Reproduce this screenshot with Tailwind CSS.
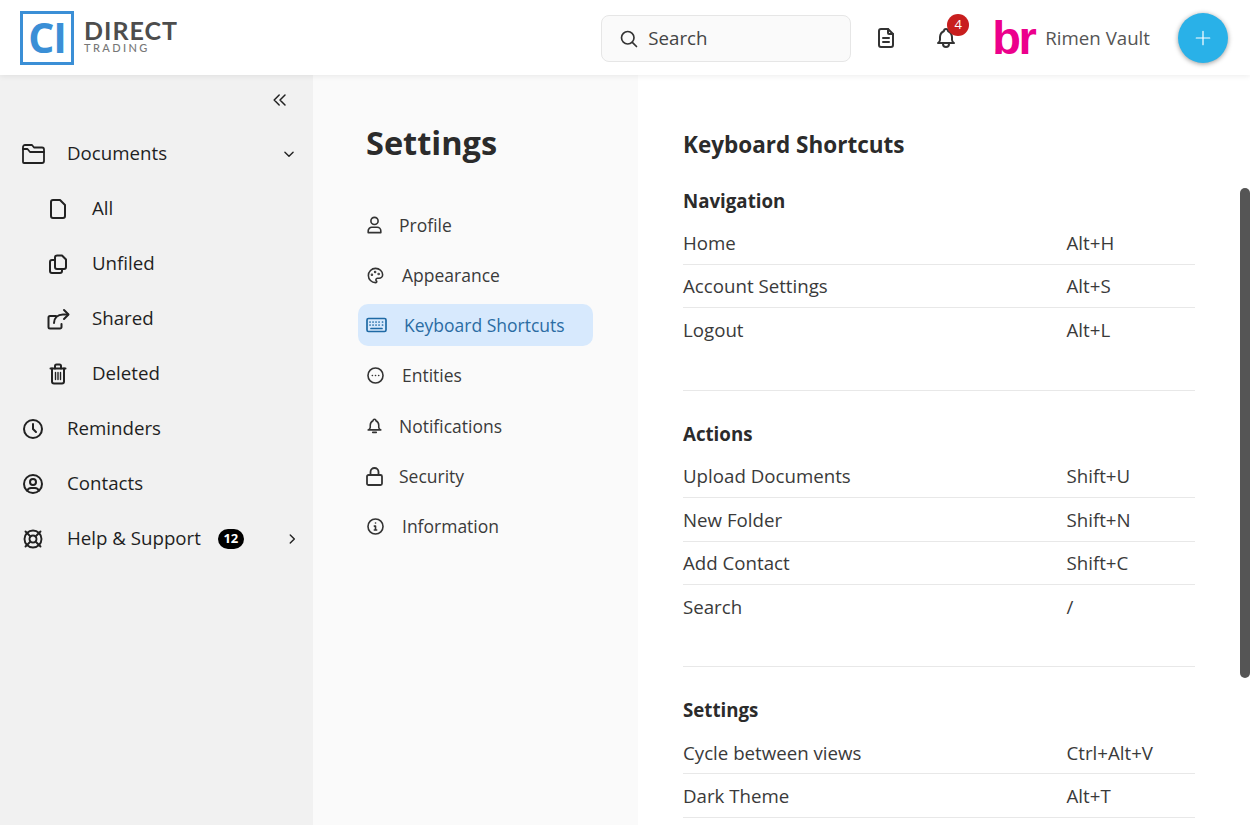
<!DOCTYPE html>
<html lang="en">
<head>
  <meta charset="UTF-8">
  <title>Settings - Keyboard Shortcuts</title>
  <script src="https://cdn.jsdelivr.net/npm/@tailwindcss/browser@4"></script>
</head>
<body class="h-screen overflow-hidden bg-white font-['Open_Sans',sans-serif] text-[#2b2b2b]">

<!-- top bar -->
<header class="relative z-10 flex h-[75px] items-center bg-white pl-[20px] pr-[22px] shadow-[0_1px_6px_rgba(0,0,0,0.08)]">
  <div class="flex items-center gap-[10px]">
    <div class="flex h-[54px] w-[54px] items-center justify-center border-[3px] border-[#3b8fd6] font-['Open_Sans',sans-serif] text-[41px] font-bold leading-none tracking-[-1px] text-[#3b8fd6]">CI</div>
    <div class="-mt-[4px] flex flex-col font-['Lato',sans-serif] leading-none">
      <span class="text-[25px] font-bold tracking-[1px] text-[#4d4d4d] leading-[24px]">DIRECT</span>
      <span class="text-[11px] font-medium tracking-[2.4px] text-[#777] leading-[11px]">TRADING</span>
    </div>
  </div>

  <div class="ml-auto flex items-center">
    <label class="mt-[2px] flex h-[47px] w-[250px] items-center gap-[9px] rounded-[8px] border border-[#e6e6e6] bg-[#fafafa] pl-[17px] text-[18.700px] text-[#444]">
      <svg class="h-[20px] w-[20px]" viewBox="0 0 24 24" fill="none" stroke="#333" stroke-width="2" stroke-linecap="round" stroke-linejoin="round"><circle cx="10.5" cy="10.5" r="7.5"/><path d="M21 21l-5-5"/></svg>
      <span>Search</span>
    </label>
    <svg class="ml-[23px] h-[24px] w-[24px]" viewBox="0 0 24 24" fill="none" stroke="#333" stroke-width="2" stroke-linecap="round" stroke-linejoin="round"><path d="M14 3v4a1 1 0 0 0 1 1h4"/><path d="M17 21H7a2 2 0 0 1-2-2V5a2 2 0 0 1 2-2h7l5 5v11a2 2 0 0 1-2 2z"/><path d="M9 12h6M9 16h6"/></svg>
    <div class="relative ml-[36px] h-[24px] w-[24px]">
      <svg class="h-[24px] w-[24px]" viewBox="0 0 24 24" fill="none" stroke="#333" stroke-width="2" stroke-linecap="round" stroke-linejoin="round"><path d="M10 5a2 2 0 1 1 4 0 7 7 0 0 1 4 6v3a4 4 0 0 0 2 3H4a4 4 0 0 0 2-3v-3a7 7 0 0 1 4-6"/><path d="M9 17v1a3 3 0 0 0 6 0v-1"/></svg>
      <span class="absolute left-[13px] top-[-12px] flex h-[22px] w-[22px] items-center justify-center rounded-full bg-[#c81e1e] text-[13px] text-white">4</span>
    </div>
    <span class="ml-[34px] w-[42px] font-['Liberation_Sans',sans-serif] text-[47px] font-bold leading-none tracking-[-2.500px] text-[#ec008c]">br</span>
    <span class="ml-[11px] text-[18.700px] leading-[28px] text-[#555]">Rimen Vault</span>
    <button class="ml-[28px] flex h-[50px] w-[50px] items-center justify-center rounded-full bg-[#29b1e8] shadow-[0_1px_5px_rgba(0,0,0,0.4)]">
      <svg class="h-[18px] w-[18px]" viewBox="0 0 24 24" fill="none" stroke="#fff" stroke-width="1.6" stroke-linecap="round"><path d="M12 3v18M3 12h18"/></svg>
    </button>
  </div>
</header>

<div class="flex h-[750px]">
  <!-- main sidebar -->
  <aside class="w-[313px] shrink-0 bg-[#f1f1f1] text-[18.700px] text-[#1f1f1f]">
    <div class="flex h-[50px] items-center justify-end pr-[23px]">
      <svg class="h-[20px] w-[20px]" viewBox="0 0 24 24" fill="none" stroke="#222" stroke-width="1.8" stroke-linecap="round" stroke-linejoin="round"><path d="M11 6l-6 6 6 6M18 6l-6 6 6 6"/></svg>
    </div>
    <nav class="pt-[1px]">
      <a class="flex h-[55px] items-center pl-[21px]">
        <svg class="h-[22px] w-[25px]" viewBox="0 0 25 22" fill="none" stroke="#222" stroke-width="1.800" stroke-linecap="round" stroke-linejoin="round"><path d="M2 19V6h4.500l2.500 3h14v9a2 2 0 0 1-2 2H3a1 1 0 0 1-1-1z"/><path d="M2 6V4a2 2 0 0 1 2-2h7l2 2.500h8a2 2 0 0 1 2 2V9"/></svg>
        <span class="ml-[21px]">Documents</span>
        <svg class="ml-auto mr-[17px] h-[14px] w-[14px]" viewBox="0 0 24 24" fill="none" stroke="#222" stroke-width="2.4" stroke-linecap="round" stroke-linejoin="round"><path d="M5 9l7 7 7-7"/></svg>
      </a>
      <a class="flex h-[55px] items-center pl-[46px]">
        <svg class="h-[24px] w-[24px]" viewBox="0 0 24 24" fill="none" stroke="#222" stroke-width="2" stroke-linecap="round" stroke-linejoin="round"><path d="M17 21H7a2 2 0 0 1-2-2V5a2 2 0 0 1 2-2h7l5 5v11a2 2 0 0 1-2 2z"/></svg>
        <span class="ml-[22px]">All</span>
      </a>
      <a class="flex h-[55px] items-center pl-[46px]">
        <svg class="h-[24px] w-[24px]" viewBox="0 0 24 24" fill="none" stroke="#222" stroke-width="2" stroke-linecap="round" stroke-linejoin="round"><path d="M9 5.5a2 2 0 0 1 2-2h5l4 4V15a2 2 0 0 1-2 2h-7a2 2 0 0 1-2-2z"/><path d="M16 17v2a2 2 0 0 1-2 2H6a2 2 0 0 1-2-2V10a2 2 0 0 1 2-2h3"/></svg>
        <span class="ml-[22px]">Unfiled</span>
      </a>
      <a class="flex h-[55px] items-center pl-[46px]">
        <svg class="h-[24px] w-[24px]" viewBox="0 0 24 24" fill="none" stroke="#222" stroke-width="2" stroke-linecap="round" stroke-linejoin="round"><path d="M10 9H4a1.500 1.500 0 0 0-1.500 1.500V20A1.500 1.500 0 0 0 4 21.500h10a1.500 1.500 0 0 0 1.500-1.500v-3"/><path d="M8 16c0-5 3.500-8.500 9-8.500H22"/><path d="M18 3l4.500 4.500L18 12"/></svg>
        <span class="ml-[22px]">Shared</span>
      </a>
      <a class="flex h-[55px] items-center pl-[46px]">
        <svg class="h-[24px] w-[24px]" viewBox="0 0 24 24" fill="none" stroke="#222" stroke-width="2" stroke-linecap="round" stroke-linejoin="round"><path d="M4.500 6.500h15"/><path d="M6 6.500v13a2 2 0 0 0 2 2h8a2 2 0 0 0 2-2v-13"/><path d="M9 6.500V4a1.500 1.500 0 0 1 1.500-1.500h3A1.500 1.500 0 0 1 15 4v2.500"/><path d="M9.500 10.500v7M12 10.500v7M14.500 10.500v7" stroke-width="1.400"/></svg>
        <span class="ml-[22px]">Deleted</span>
      </a>
      <a class="flex h-[55px] items-center pl-[21px]">
        <svg class="h-[24px] w-[24px]" viewBox="0 0 24 24" fill="none" stroke="#222" stroke-width="2" stroke-linecap="round" stroke-linejoin="round"><circle cx="12" cy="12" r="9"/><path d="M12 7v5l3 3"/></svg>
        <span class="ml-[22px]">Reminders</span>
      </a>
      <a class="flex h-[55px] items-center pl-[21px]">
        <svg class="h-[24px] w-[24px]" viewBox="0 0 24 24" fill="none" stroke="#222" stroke-width="2" stroke-linecap="round" stroke-linejoin="round"><circle cx="12" cy="12" r="9"/><circle cx="12" cy="10" r="3"/><path d="M6.200 18.800A4 4 0 0 1 10 16h4a4 4 0 0 1 3.800 2.800"/></svg>
        <span class="ml-[22px]">Contacts</span>
      </a>
      <a class="flex h-[55px] items-center pl-[21px]">
        <svg class="h-[24px] w-[24px]" viewBox="0 0 24 24" fill="none" stroke="#222" stroke-width="1.900" stroke-linecap="round" stroke-linejoin="round"><circle cx="12" cy="12" r="8.500"/><circle cx="12" cy="12" r="3.500"/><path d="M4.500 4.500l5 5M19.500 4.500l-5 5M4.500 19.500l5-5M19.500 19.500l-5-5"/></svg>
        <span class="ml-[22px]">Help &amp; Support</span>
        <span class="ml-[17px] flex h-[20px] w-[26px] items-center justify-center rounded-full bg-black text-[13px] font-bold text-white">12</span>
        <svg class="ml-auto mr-[14px] h-[14px] w-[14px]" viewBox="0 0 24 24" fill="none" stroke="#222" stroke-width="2.400" stroke-linecap="round" stroke-linejoin="round"><path d="M9 5l7 7-7 7"/></svg>
      </a>
    </nav>
  </aside>

  <!-- settings menu -->
  <section class="w-[325px] shrink-0 bg-[#fafafa] pl-[45px] pr-[45px] text-[17.500px] text-[#3a3a3a]">
    <h1 class="ml-[8px] mt-[45px] text-[32.500px] font-bold leading-[46px] text-[#2b2b2b]">Settings</h1>
    <ul class="mt-[38px]">
      <li class="flex h-[42px] items-center gap-[16px] px-[8px]">
        <svg class="h-[18px] w-[17px]" viewBox="0 0 18 20" fill="none" stroke="#333" stroke-width="1.800" stroke-linecap="round" stroke-linejoin="round"><circle cx="9" cy="5.500" r="4"/><path d="M2 18.500v-2a4 4 0 0 1 4-4h6a4 4 0 0 1 4 4v2z"/></svg>
        <span>Profile</span>
      </li>
      <li class="mt-[8px] flex h-[42px] items-center gap-[17px] px-[8px]">
        <svg class="h-[19px] w-[19px]" viewBox="0 0 24 24" fill="none" stroke="#333" stroke-width="2" stroke-linecap="round" stroke-linejoin="round"><path d="M12 21a9 9 0 1 1 0-18c5 0 9 3.600 9 8a4.500 4.500 0 0 1-4.500 4.500h-2a2 2 0 0 0-1 3.750A1.300 1.300 0 0 1 12 21"/><circle cx="7.500" cy="11" r=".6"/><circle cx="11.500" cy="7.500" r=".6"/><circle cx="16" cy="10" r=".6"/></svg>
        <span>Appearance</span>
      </li>
      <li class="mt-[8px] flex h-[42px] items-center gap-[17px] rounded-[10px] bg-[#d7e9fd] px-[8px] text-[#2b6ca3]">
        <svg class="h-[16px] w-[21px]" viewBox="0 0 21 16" fill="none" stroke="#1f6aa5" stroke-width="1.700" stroke-linecap="round" stroke-linejoin="round"><rect x="1" y="1.500" width="19" height="13" rx="1.500"/><path d="M4 5h.1M7 5h.1M10 5h.1M13 5h.1M16.500 5h.1M4 8h.1M7 8h.1M10 8h.1M13 8h.1M16.500 8h.1M5 11.500h11"/></svg>
        <span>Keyboard Shortcuts</span>
      </li>
      <li class="mt-[8px] flex h-[42px] items-center gap-[17px] px-[8px]">
        <svg class="h-[19px] w-[19px]" viewBox="0 0 24 24" fill="none" stroke="#333" stroke-width="2" stroke-linecap="round" stroke-linejoin="round"><circle cx="12" cy="12" r="9.500"/><path d="M8 12h.1M12 12h.1M16 12h.1"/></svg>
        <span>Entities</span>
      </li>
      <li class="mt-[9px] flex h-[42px] items-center gap-[16px] px-[8px]">
        <svg class="h-[18px] w-[17px]" viewBox="0 0 24 24" fill="none" stroke="#333" stroke-width="2.200" stroke-linecap="round" stroke-linejoin="round"><path d="M10 4.500a2 2 0 1 1 4 0 7 7 0 0 1 4 6v3.500a4 4 0 0 0 3 3.500H3a4 4 0 0 0 3-3.500v-3.500a7 7 0 0 1 4-6"/><path d="M9.500 21h5"/></svg>
        <span>Notifications</span>
      </li>
      <li class="mt-[8px] flex h-[42px] items-center gap-[16px] px-[8px]">
        <svg class="h-[19px] w-[17px]" viewBox="0 0 17 19" fill="none" stroke="#333" stroke-width="1.800" stroke-linecap="round" stroke-linejoin="round"><rect x="1" y="8" width="15" height="10" rx="1.500"/><path d="M4.500 8V5a4 4 0 0 1 8 0v3"/></svg>
        <span>Security</span>
      </li>
      <li class="mt-[8px] flex h-[42px] items-center gap-[17px] px-[8px]">
        <svg class="h-[19px] w-[19px]" viewBox="0 0 24 24" fill="none" stroke="#333" stroke-width="2" stroke-linecap="round" stroke-linejoin="round"><circle cx="12" cy="12" r="9.500"/><path d="M12 7.500h.1"/><path d="M10.500 11.500H12V16.500M10.500 16.500h3"/></svg>
        <span>Information</span>
      </li>
    </ul>
  </section>

  <!-- shortcuts -->
  <main class="min-w-0 flex-1 pl-[45px] pr-[55px] text-[18.700px] text-[#3a3a3a]">
    <h2 class="mt-[52px] text-[22.500px] font-bold leading-[36px] text-[#2b2b2b]">Keyboard Shortcuts</h2>

    <h3 class="mt-[25px] text-[18.700px] font-bold leading-[26px] text-[#2b2b2b]">Navigation</h3>
    <div class="mt-[7px]">
      <div class="flex h-[43.500px] items-center border-b border-[#e8e8e8] pt-[1px]"><span class="w-[383.500px]">Home</span><span>Alt+H</span></div>
      <div class="flex h-[43.500px] items-center border-b border-[#e8e8e8] pt-[1px]"><span class="w-[383.500px]">Account Settings</span><span>Alt+S</span></div>
      <div class="flex h-[43.500px] items-center"><span class="w-[383.500px]">Logout</span><span>Alt+L</span></div>
    </div>
    <div class="mt-[38px] border-t border-[#e8e8e8]"></div>

    <h3 class="mt-[30px] text-[18.700px] font-bold leading-[26px] text-[#2b2b2b]">Actions</h3>
    <div class="mt-[8px]">
      <div class="flex h-[43.500px] items-center border-b border-[#e8e8e8]"><span class="w-[383.500px]">Upload Documents</span><span>Shift+U</span></div>
      <div class="flex h-[43.500px] items-center border-b border-[#e8e8e8] pt-[1px]"><span class="w-[383.500px]">New Folder</span><span>Shift+N</span></div>
      <div class="flex h-[43.500px] items-center border-b border-[#e8e8e8]"><span class="w-[383.500px]">Add Contact</span><span>Shift+C</span></div>
      <div class="flex h-[43.500px] items-center"><span class="w-[383.500px]">Search</span><span>/</span></div>
    </div>
    <div class="mt-[37px] border-t border-[#e8e8e8]"></div>

    <h3 class="mt-[30px] text-[18.700px] font-bold leading-[26px] text-[#2b2b2b]">Settings</h3>
    <div class="mt-[8px]">
      <div class="flex h-[43.500px] items-center border-b border-[#e8e8e8] pt-[2px]"><span class="w-[383.500px]">Cycle between views</span><span>Ctrl+Alt+V</span></div>
      <div class="flex h-[43.500px] items-center border-b border-[#e8e8e8] pt-[2px]"><span class="w-[383.500px]">Dark Theme</span><span>Alt+T</span></div>
    </div>
  </main>
</div>

<!-- scrollbar thumb -->
<div class="absolute left-[1240px] top-[188px] h-[490px] w-[10px] rounded-t-[5px] rounded-b-[5px] bg-[#555]"></div>

</body>
</html>
